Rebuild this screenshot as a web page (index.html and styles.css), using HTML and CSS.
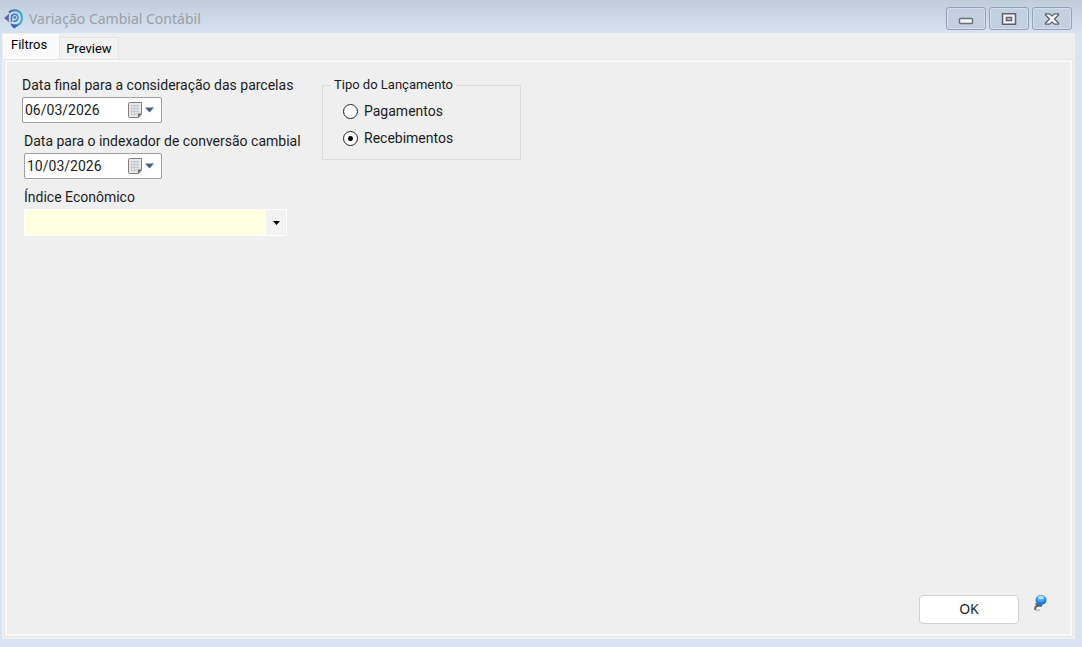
FILE: index.html
```html
<!DOCTYPE html>
<html lang="pt-BR">
<head>
  <meta charset="utf-8">
  <title>Variação Cambial Contábil</title>
  <link rel="stylesheet" href="styles.css">
</head>
<body>
  <div class="window">
    <header class="title-bar">
      <svg class="app-icon" width="20" height="20" viewBox="0 0 20 20" fill="none">
        <defs>
          <linearGradient id="logo" gradientUnits="userSpaceOnUse" x1="0" y1="0" x2="20" y2="0">
            <stop offset="0" stop-color="#5b57a8"/>
            <stop offset="0.5" stop-color="#3a78b8"/>
            <stop offset="1" stop-color="#35bdd6"/>
          </linearGradient>
        </defs>
        <path d="M5 3.500C8.500 -0.500 18 0.500 18 9C18 13.500 15 16.500 11 16.500" stroke="url(#logo)" stroke-width="2"/>
        <path d="M7.500 13V8.500C7.500 4 14 4 14 8.500C14 12 11 12.500 9.500 12" stroke="url(#logo)" stroke-width="1.500"/>
        <path d="M6.500 14C8 15.500 9.500 15 11 15.500L14 16.500L10.500 19.500C8.500 18.500 7 17 6.500 14Z" fill="#3a66ae"/>
        <path d="M0 9L5.500 4.500C4.500 7.500 4.500 10.500 5.500 13.500Z" fill="#5b62ae"/>
        <circle cx="10.800" cy="8.500" r="1.400" fill="#3a8fc4"/>
      </svg>
      <h1 class="title">Variação Cambial Contábil</h1>
      <div class="window-buttons">
        <button class="window-btn" type="button" aria-label="Minimizar">
          <svg width="16" height="12" viewBox="0 0 16 12"><rect x="1.500" y="5.500" width="13" height="5" rx="1" fill="#f2f2f2" stroke="#6a7080" stroke-width="1.400"/></svg>
        </button>
        <button class="window-btn" type="button" aria-label="Maximizar">
          <svg width="16" height="12" viewBox="0 0 16 12"><path d="M1.500 0.800H14.500V11.200H1.500ZM5.500 4.500V7.500H10.500V4.500Z" fill="#f2f2f2" fill-rule="evenodd" stroke="#5c6274" stroke-width="1.500"/></svg>
        </button>
        <button class="window-btn" type="button" aria-label="Fechar">
          <svg width="16" height="12" viewBox="0 0 16 12"><path d="M1.500 0.800H5.500L8 3L10.500 0.800H14.500V2L10.500 6L14.500 10V11.200H10.500L8 9L5.500 11.200H1.500V10L5.500 6L1.500 2Z" fill="#f2f2f2" stroke="#5c6274" stroke-width="1.300"/></svg>
        </button>
      </div>
    </header>

    <main class="tab-control">
      <div class="tabs" role="tablist">
        <button class="tab active" type="button" role="tab" aria-selected="true">Filtros</button>
        <button class="tab" type="button" role="tab" aria-selected="false">Preview</button>
      </div>

      <form class="tab-page">
        <div class="filters">
          <div class="fields">
            <div class="field first">
              <label for="data-final">Data final para a consideração das parcelas</label>
              <div class="date-box">
                <input type="text" id="data-final" class="date-input" value="06/03/2026">
                <button class="date-btn" type="button" aria-label="Abrir calendário">
                  <svg width="26" height="16" viewBox="0 0 26 16">
                    <path d="M1.500 0.500H13.500V12L10.500 15.500H1.500Q0.500 15.500 0.500 14.500V1.500Q0.500 0.500 1.500 0.500Z" fill="#e6e7ea" stroke="#857b78"/>
                    <path d="M3 3.500H11M3 6.500H11M3 9.500H11M3 12.500H9M3.500 3V13M6.500 3V13M9.500 3V12" stroke="#c3c8d0"/>
                    <path d="M14 11.500L10 15.500V12.500Q10 11.500 11 11.500Z" fill="#6f6868"/>
                    <path d="M17 5.500H26L21.500 10.500Z" fill="#46608c"/>
                  </svg>
                </button>
              </div>
            </div>
            <div class="field">
              <label for="data-indexador">Data para o indexador de conversão cambial</label>
              <div class="date-box">
                <input type="text" id="data-indexador" class="date-input" value="10/03/2026">
                <button class="date-btn" type="button" aria-label="Abrir calendário">
                  <svg width="26" height="16" viewBox="0 0 26 16">
                    <path d="M1.500 0.500H13.500V12L10.500 15.500H1.500Q0.500 15.500 0.500 14.500V1.500Q0.500 0.500 1.500 0.500Z" fill="#e6e7ea" stroke="#857b78"/>
                    <path d="M3 3.500H11M3 6.500H11M3 9.500H11M3 12.500H9M3.500 3V13M6.500 3V13M9.500 3V12" stroke="#c3c8d0"/>
                    <path d="M14 11.500L10 15.500V12.500Q10 11.500 11 11.500Z" fill="#6f6868"/>
                    <path d="M17 5.500H26L21.500 10.500Z" fill="#46608c"/>
                  </svg>
                </button>
              </div>
            </div>
            <div class="field">
              <label for="indice">Índice Econômico</label>
              <div class="combo">
                <select id="indice" class="combo-select">
                  <option value=""></option>
                </select>
                <span class="combo-arrow">
                  <svg width="7" height="4" viewBox="0 0 7 4"><path d="M0 0H7L3.500 4Z" fill="#000"/></svg>
                </span>
              </div>
            </div>
          </div>

          <fieldset class="group">
            <legend>Tipo do Lançamento</legend>
            <label class="option"><input type="radio" name="tipo" value="pagamentos">Pagamentos</label>
            <label class="option"><input type="radio" name="tipo" value="recebimentos" checked>Recebimentos</label>
          </fieldset>
        </div>

        <div class="actions">
          <button class="ok-btn" type="button">OK</button>
          <button class="pin-btn" type="button" aria-label="Fixar">
            <svg width="14" height="18" viewBox="0 0 14 18">
              <defs>
                <radialGradient id="pin" cx="0.5" cy="0.3" r="0.7">
                  <stop offset="0" stop-color="#8fd0ff"/>
                  <stop offset="0.5" stop-color="#3a9cf5"/>
                  <stop offset="1" stop-color="#0b5cc0"/>
                </radialGradient>
              </defs>
              <path d="M3 15.500L7 15" stroke="#c8c8c8" stroke-width="2"/>
              <path d="M6.500 9L4.500 11L2.500 12L2 15" fill="none" stroke="#666" stroke-width="2"/>
              <path d="M2.500 8.500Q5 12 9 10.500" fill="none" stroke="#555" stroke-width="1.500"/>
              <ellipse cx="8" cy="5" rx="5.500" ry="5" fill="url(#pin)"/>
              <ellipse cx="8" cy="2.500" rx="3" ry="1.500" fill="#b5e0ff"/>
            </svg>
          </button>
        </div>
      </form>
    </main>
  </div>
</body>
</html>
```

FILE: styles.css
```css
* {
  box-sizing: border-box;
}
body {
  margin: 0;
  font-family: Roboto, "Liberation Sans", sans-serif;
  font-size: 14px;
  line-height: 16px;
  color: #1c1c1c;
}
button,
input,
select {
  font: inherit;
  color: inherit;
}
button {
  padding: 0;
  border: none;
  background: transparent;
}

/* Window frame */
.window {
  display: flex;
  flex-direction: column;
  min-height: 100vh;
  padding: 0 7px 8px 2px;
  background: linear-gradient(#bfccda 0, #d7e4f1 34px);
}
.title-bar {
  display: flex;
  align-items: center;
  height: 33px;
  padding: 4px 0 0 2px;
}
.app-icon {
  margin-right: 5px;
}
.title {
  flex: 1;
  margin: 0;
  font-family: "Noto Sans", sans-serif;
  font-size: 14px;
  font-weight: normal;
  color: #9a9fa6;
}
.window-buttons {
  display: flex;
  gap: 3px;
  padding-right: 3px;
}
.window-btn {
  display: flex;
  align-items: center;
  justify-content: center;
  width: 40px;
  height: 23px;
  border: 1px solid #93a2bb;
  border-radius: 3px;
  background: #c3d0df;
  box-shadow: inset 0 0 0 1px #d5dfeb;
}

/* Tabs */
.tab-control {
  flex: 1;
  display: flex;
  flex-direction: column;
  padding: 0 3px 3px 1px;
  background: #efefef;
}
.tabs {
  display: flex;
  align-items: flex-end;
  height: 27px;
}
.tab {
  height: 23px;
  padding: 0 6px;
  border: 1px solid #e6e6e6;
  border-bottom: none;
  background: #f2f2f2;
  color: #000;
  font-size: 13px;
}
.tab.active {
  height: 26px;
  padding: 0 12px 4px 8px;
  border: none;
  background: #fafafa;
}
.tab-page {
  flex: 1;
  display: flex;
  flex-direction: column;
  justify-content: space-between;
  margin-left: 2px;
  padding: 15px 23px 10px 14px;
  border: 2px solid #f9f9f9;
  outline: 1px solid #e6e6e6;
  background: #efefef;
}

/* Filters */
.filters {
  display: flex;
  align-items: flex-start;
  gap: 22px;
}
.fields {
  display: flex;
  flex-direction: column;
  gap: 10px;
  width: 279px;
}
.field {
  display: flex;
  flex-direction: column;
  gap: 4px;
  padding-left: 3px;
}
.field.first {
  padding-left: 1px;
}
.field label {
  white-space: nowrap;
}
.date-box {
  display: flex;
  align-items: center;
  justify-content: space-between;
  max-width: 138px;
  height: 26px;
  padding: 0 7px 0 2px;
  border: 1px solid #a0a0a0;
  border-radius: 2px;
  background: #fff;
}
.first .date-box {
  max-width: 140px;
}
.date-input {
  width: 88px;
  padding: 0;
  border: none;
  outline: none;
  background: transparent;
}
.date-btn {
  display: flex;
}
.combo {
  display: grid;
  width: 263px;
  height: 27px;
  border: 1px solid #fff;
}
.combo-select {
  grid-area: 1 / 1;
  padding: 0 24px 0 4px;
  border: none;
  border-radius: 0;
  outline: none;
  appearance: none;
  background: #ffffe1;
}
.combo-arrow {
  grid-area: 1 / 1;
  justify-self: end;
  display: flex;
  align-items: center;
  justify-content: center;
  width: 21px;
  border-left: 1px solid #fff;
  background: #f2f2f2;
  pointer-events: none;
}

/* Radio group */
.group {
  display: flex;
  flex-direction: column;
  gap: 11px;
  width: 199px;
  margin: 0;
  padding: 10px 20px 13px;
  border: 1px solid #dcdcdc;
}
.group legend {
  margin-left: -12px;
  padding: 0 3px;
  font-size: 13px;
}
.option {
  display: flex;
  align-items: center;
  gap: 6px;
}
.option input {
  width: 15px;
  height: 15px;
  margin: 0;
  border: 1px solid #222;
  border-radius: 50%;
  appearance: none;
  background: #fff;
}
.option input:checked {
  background: radial-gradient(circle, #000 2px, #fff 3px);
}

/* Footer buttons */
.actions {
  display: flex;
  justify-content: flex-end;
  gap: 14px;
}
.ok-btn {
  width: 100px;
  height: 29px;
  padding-bottom: 2px;
  border: 1px solid #cfd1d1;
  border-radius: 4px;
  background: #fff;
  font-family: "Noto Sans", sans-serif;
}
.pin-btn {
  align-self: flex-start;
}
```
